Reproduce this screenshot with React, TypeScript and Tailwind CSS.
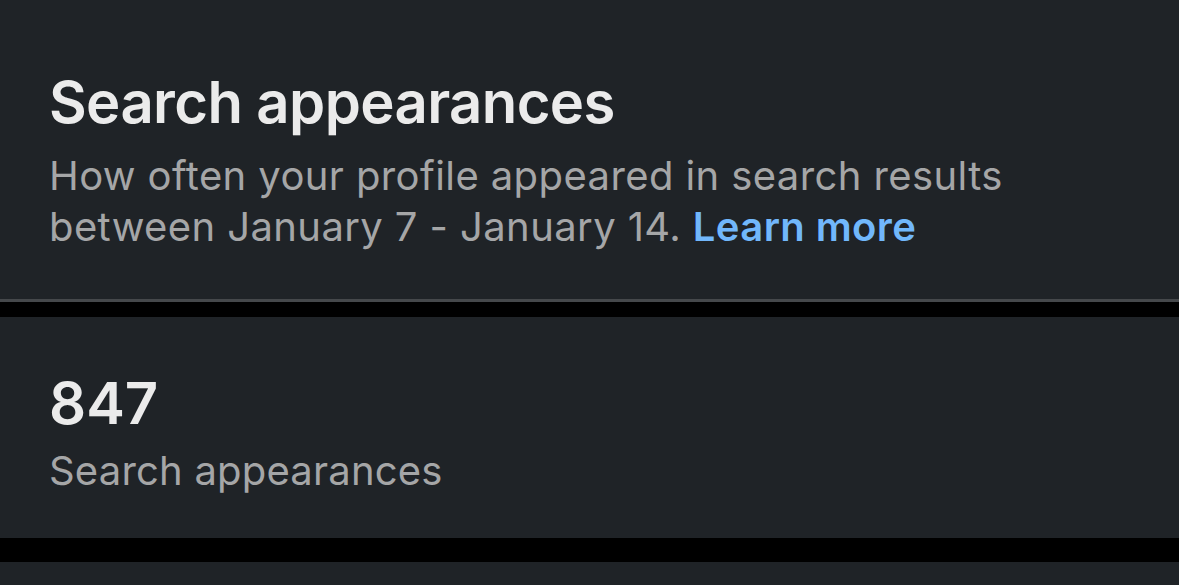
import React from 'react';

export default function App() {
  return (
    <div className="h-[585px] w-full overflow-hidden bg-black font-['Inter','Roboto',sans-serif]">
      {/* 标题区域 */}
      <section className="h-[302px] border-b-[3px] border-[#45484b] bg-[#1f2327] px-[49px] pt-[66px]">
        <h1 className="text-[58px] font-semibold leading-[72px] tracking-[-0.6px] text-[#ebebeb]">
          Search appearances
        </h1>
        <p className="mt-[12px] text-[40px] leading-[51px] tracking-[0.4px] text-[#a5a6a7]">
          How often your profile appeared in search results between January 7 - January 14.{' '}
          <span className="font-semibold text-[#71b7fb]">Learn more</span>
        </p>
      </section>

      {/* 统计数字 */}
      <section className="mt-[15px] h-[221px] bg-[#1f2327] px-[49px] pt-[50px]">
        <div className="text-[58px] font-semibold leading-[72px] text-[#ebebeb]">847</div>
        <div className="mt-[6px] text-[40px] leading-[51px] tracking-[0.2px] text-[#a5a6a7]">Search appearances</div>
      </section>

      <section className="mt-[24px] h-[60px] bg-[#1f2327]" />
    </div>
  );
}
